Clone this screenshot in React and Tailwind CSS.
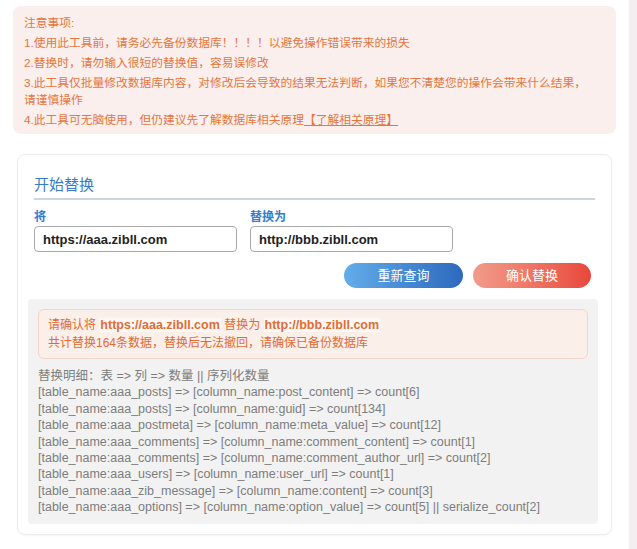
const font = "font-['Liberation_Sans','Noto_Sans_CJK_SC',sans-serif]";

const details = [
  "[table_name:aaa_posts] => [column_name:post_content] => count[6]",
  "[table_name:aaa_posts] => [column_name:guid] => count[134]",
  "[table_name:aaa_postmeta] => [column_name:meta_value] => count[12]",
  "[table_name:aaa_comments] => [column_name:comment_content] => count[1]",
  "[table_name:aaa_comments] => [column_name:comment_author_url] => count[2]",
  "[table_name:aaa_users] => [column_name:user_url] => count[1]",
  "[table_name:aaa_zib_message] => [column_name:content] => count[3]",
  "[table_name:aaa_options] => [column_name:option_value] => count[5] || serialize_count[2]",
];

export default function App() {
  return (
    <div className={`flex min-h-[549px] w-full bg-white ${font}`}>
      <div className="flex-1 px-[13px] pt-[6px]">
        {/* Notice */}
        <div className="flex flex-col gap-[3px] rounded-lg bg-[#faefec] px-[11px] pb-[6px] pt-[8px] text-[11.75px] leading-[17px] text-[#e5763f]">
          <div>注意事项:</div>
          <div>1.使用此工具前，请务必先备份数据库！！！！以避免操作错误带来的损失</div>
          <div>2.替换时，请勿输入很短的替换值，容易误修改</div>
          <div>
            3.此工具仅批量修改数据库内容，对修改后会导致的结果无法判断，如果您不清楚您的操作会带来什么结果，
            <br />
            请谨慎操作
          </div>
          <div>
            4.此工具可无脑使用，但仍建议先了解数据库相关原理
            <a className="underline">【了解相关原理】</a>
          </div>
        </div>

        {/* Card */}
        <div className="mx-[4px] mt-[20px] rounded-lg border border-[#ececec] bg-white pb-[10px] shadow-[0_1px_3px_rgba(0,0,0,0.04)]">
          <div className="px-[16px] pt-[20px]">
            <h3 className="border-b-2 border-[#c9d7e0] pb-[3px] text-[15px] leading-[20px] text-[#3a7cc4]">
              开始替换
            </h3>
            <div className="mt-[9px] flex gap-[13px]">
              <div>
                <label className="block text-[12px] font-bold leading-[16px] text-[#2f7dd0]">将</label>
                <input
                  defaultValue="https://aaa.zibll.com"
                  className="mt-[1px] h-[26px] w-[203px] rounded-[4px] border border-[#a9a9a9] px-[8px] text-[13px] font-bold text-[#222] outline-none"
                />
              </div>
              <div>
                <label className="block text-[12px] font-bold leading-[16px] text-[#2f7dd0]">替换为</label>
                <input
                  defaultValue="http://bbb.zibll.com"
                  className="mt-[1px] h-[26px] w-[203px] rounded-[4px] border border-[#a9a9a9] px-[8px] text-[13px] font-bold text-[#222] outline-none"
                />
              </div>
            </div>
            <div className="mt-[11px] flex justify-end gap-[10px] pr-[4px]">
              <button className="h-[25px] w-[119px] rounded-full bg-gradient-to-r from-[#63adea] to-[#2d69bd] text-[13px] text-white">
                重新查询
              </button>
              <button className="h-[25px] w-[118px] rounded-full bg-gradient-to-r from-[#f19b8b] to-[#e8463a] text-[13px] text-white">
                确认替换
              </button>
            </div>
          </div>

          {/* Result panel */}
          <div className="ml-[10px] mr-[13px] mt-[11px] rounded bg-[#f2f2f2] px-[10px] pb-[8px] pt-[10px]">
            <div className="rounded-md border border-[#f3d4c8] bg-[#fbefea] px-[9px] py-[6px] text-[12px] leading-[18px] text-[#e26b34]">
              <div>
                请确认将{" "}
                <span className="bg-[#fdf8f6] px-[1px] text-[12.5px] font-bold">https://aaa.zibll.com</span>{" "}
                替换为{" "}
                <span className="bg-[#fdf8f6] px-[1px] text-[12.5px] font-bold">http://bbb.zibll.com</span>
              </div>
              <div>共计替换164条数据，替换后无法撤回，请确保已备份数据库</div>
            </div>
            <div className="mt-[9px] text-[12.5px] leading-[16.4px] text-[#7d7d7d]">
              <div>替换明细：表 =&gt; 列 =&gt; 数量 || 序列化数量</div>
              {details.map((d, i) => (
                <div key={i}>{d}</div>
              ))}
            </div>
          </div>
        </div>
      </div>
      <div className="w-[8px] bg-[#f4eef0]" />
    </div>
  );
}
